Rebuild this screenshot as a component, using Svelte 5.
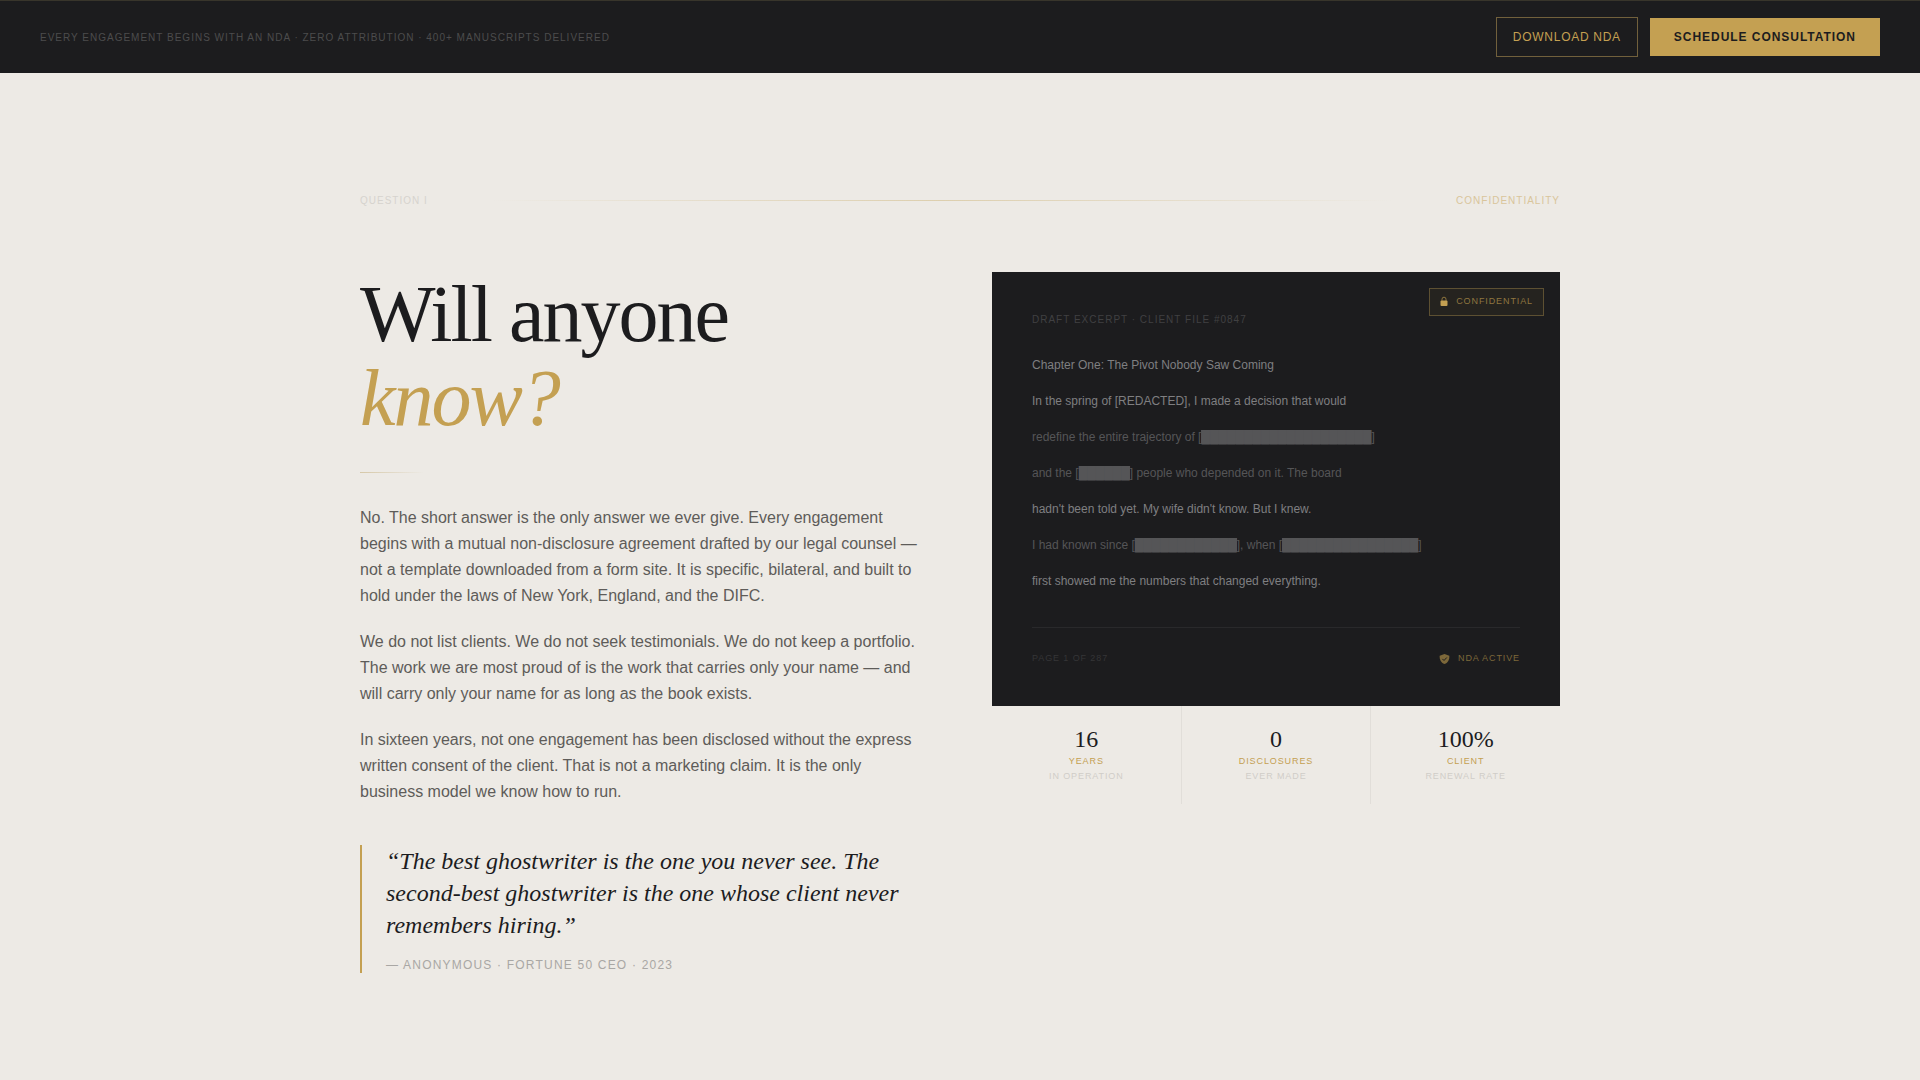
<script lang="ts">
  type Line = { text: string; bright: boolean };

  const block = (n: number) => '█'.repeat(n);

  const excerpt: Line[] = [
    { text: 'Chapter One: The Pivot Nobody Saw Coming', bright: true },
    { text: 'In the spring of [REDACTED], I made a decision that would', bright: true },
    { text: `redefine the entire trajectory of [${block(20)}]`, bright: false },
    { text: `and the [${block(6)}] people who depended on it. The board`, bright: false },
    { text: "hadn't been told yet. My wife didn't know. But I knew.", bright: true },
    { text: `I had known since [${block(12)}], when [${block(16)}]`, bright: false },
    { text: 'first showed me the numbers that changed everything.', bright: true }
  ];

  const parts = (text: string) => text.split(/(█+)/).filter(Boolean);

  const stats = [
    { value: '16', label: 'Years', note: 'In operation' },
    { value: '0', label: 'Disclosures', note: 'Ever made' },
    { value: '100%', label: 'Client', note: 'Renewal rate' }
  ];
</script>

<header class="bar">
  <p class="bar-note">Every engagement begins with an NDA · Zero attribution · 400+ manuscripts delivered</p>
  <div class="bar-actions">
    <button class="btn btn-outline" type="button">Download NDA</button>
    <button class="btn btn-solid" type="button">Schedule Consultation</button>
  </div>
</header>

<main class="section">
  <div class="section-head">
    <span class="head-label">Question I</span>
    <span class="head-rule"></span>
    <span class="head-label head-topic">Confidentiality</span>
  </div>

  <div class="columns">
    <section>
      <h1>Will anyone<br /><em>know?</em></h1>
      <div class="title-rule"></div>

      <div class="copy">
        <p>
          No. The short answer is the only answer we ever give. Every engagement begins with a mutual
          non-disclosure agreement drafted by our legal counsel — not a template downloaded from a
          form site. It is specific, bilateral, and built to hold under the laws of New York,
          England, and the DIFC.
        </p>
        <p>
          We do not list clients. We do not seek testimonials. We do not keep a portfolio. The work
          we are most proud of is the work that carries only your name — and will carry only your
          name for as long as the book exists.
        </p>
        <p>
          In sixteen years, not one engagement has been disclosed without the express written
          consent of the client. That is not a marketing claim. It is the only business model we
          know how to run.
        </p>
      </div>

      <figure class="quote">
        <blockquote>
          “The best ghostwriter is the one you never see. The second-best ghostwriter is the one
          whose client never remembers hiring.”
        </blockquote>
        <figcaption>— Anonymous · Fortune 50 CEO · 2023</figcaption>
      </figure>
    </section>

    <aside>
      <article class="draft">
        <div class="stamp">
          <svg width="8" height="10" viewBox="0 0 8 10" aria-hidden="true">
            <path d="M2 4.8V3.2a2 2 0 0 1 4 0v1.6" fill="none" stroke="#8f763f" />
            <rect x="0.5" y="4.5" width="7" height="5.5" rx="1" fill="currentColor" />
          </svg>
          <span>Confidential</span>
        </div>

        <p class="draft-label">Draft excerpt · Client file #0847</p>

        <div class="excerpt">
          {#each excerpt as line}
            <p class:bright={line.bright}>
              {#each parts(line.text) as part}<span class:redacted={part.startsWith('█')}>{part}</span>{/each}
            </p>
          {/each}
        </div>

        <footer class="draft-foot">
          <span>Page 1 of 287</span>
          <span class="nda">
            <svg width="11" height="10" viewBox="0 0 11 10" aria-hidden="true">
              <path
                d="M5.5 0 10.3 1.7C10.6 5.4 9.2 8.5 5.5 10 1.8 8.5 .4 5.4 .7 1.7Z"
                fill="currentColor"
              />
              <path d="m3.4 4.9 1.6 1.6 2.8-3" fill="none" stroke="#1c1c1e" />
            </svg>
            NDA active
          </span>
        </footer>
      </article>

      <dl class="stats">
        {#each stats as stat}
          <div class="stat">
            <dd class="value">{stat.value}</dd>
            <dt>{stat.label}</dt>
            <dd class="note">{stat.note}</dd>
          </div>
        {/each}
      </dl>
    </aside>
  </div>
</main>

<style>
  :global(body) {
    background: #edeae5;
    color: #1c1c1e;
    font-family: 'Liberation Sans', Arial, sans-serif;
  }

  h1,
  p,
  dl,
  dd,
  figure,
  blockquote {
    margin: 0;
  }

  .bar {
    display: flex;
    align-items: center;
    justify-content: space-between;
    padding: 16px 40px;
    border-top: 1px solid #38352b;
    background: #1c1c1e;
  }

  .bar-note {
    color: #4c4c4d;
    font-size: 10px;
    line-height: 15px;
    letter-spacing: 1px;
    text-transform: uppercase;
  }

  .bar-actions {
    display: flex;
    align-items: center;
    gap: 12px;
  }

  .btn {
    border: 0;
    border-radius: 0;
    font-family: inherit;
    font-size: 12px;
    line-height: 18px;
    text-transform: uppercase;
    cursor: pointer;
  }

  .btn-outline {
    padding: 10px 16px;
    border: 1px solid #71603c;
    background: transparent;
    color: #c4a052;
    letter-spacing: 0.06em;
  }

  .btn-solid {
    padding: 10px 24px;
    background: #c4a052;
    color: #1c1c1e;
    font-weight: 700;
    letter-spacing: 0.08em;
  }

  .section {
    max-width: 1200px;
    margin: 0 auto;
    padding: 120px 24px 96px;
  }

  .section-head {
    display: flex;
    align-items: center;
    justify-content: space-between;
    margin-bottom: 64px;
  }

  .head-label {
    color: #d6d3ce;
    font-size: 10px;
    line-height: 15px;
    letter-spacing: 1px;
    text-transform: uppercase;
  }

  .head-topic {
    color: #d9c59b;
  }

  .head-rule {
    flex: 1;
    height: 1px;
    margin: 0 64px;
    background: linear-gradient(to right, transparent, #ddcfae, transparent);
  }

  .columns {
    display: grid;
    grid-template-columns: 1fr 1fr;
    align-items: start;
    gap: 64px;
  }

  h1 {
    font-family: 'Liberation Serif', 'Times New Roman', serif;
    font-size: 80px;
    font-weight: 400;
    line-height: 84px;
    letter-spacing: -2px;
  }

  h1 em {
    color: #c4a052;
  }

  .title-rule {
    width: 64px;
    height: 1px;
    margin: 32px 0;
    background: linear-gradient(to right, #d6c8a8, transparent);
  }

  .copy {
    display: grid;
    gap: 20px;
    color: #5e5c59;
    font-size: 16px;
    line-height: 26px;
  }

  .quote {
    margin-top: 40px;
    padding-left: 24px;
    border-left: 2px solid #c4a052;
  }

  blockquote {
    font-family: 'Liberation Serif', 'Times New Roman', serif;
    font-size: 24px;
    font-style: italic;
    line-height: 32px;
  }

  figcaption {
    margin-top: 16px;
    color: #a9a7a4;
    font-size: 12px;
    line-height: 16px;
    letter-spacing: 0.1em;
    text-transform: uppercase;
  }

  .draft {
    position: relative;
    padding: 40px;
    background: #1c1c1e;
  }

  .stamp {
    position: absolute;
    top: 16px;
    right: 16px;
    display: flex;
    align-items: center;
    gap: 8px;
    padding: 5px 10px 7px;
    border: 1px solid #5d5032;
    background: #25231f;
    color: #8f763f;
    font-size: 9px;
    line-height: 14px;
    letter-spacing: 0.1em;
    text-transform: uppercase;
  }

  .stamp svg {
    color: #c4a052;
  }

  .draft-label {
    margin-bottom: 24px;
    color: #404042;
    font-size: 10px;
    line-height: 16px;
    letter-spacing: 1px;
    text-transform: uppercase;
  }

  .excerpt {
    display: grid;
    gap: 10px;
    color: #555557;
    font-size: 12px;
    line-height: 26px;
  }

  .excerpt .bright {
    color: #7f7f81;
  }

  .redacted {
    background: #525254;
  }

  .draft-foot {
    display: flex;
    align-items: center;
    justify-content: space-between;
    margin-top: 33px;
    padding-top: 23px;
    border-top: 1px solid #29292b;
    color: #353537;
    font-size: 9px;
    line-height: 15px;
    letter-spacing: 0.1em;
    text-transform: uppercase;
  }

  .nda {
    display: flex;
    align-items: center;
    gap: 8px;
    color: #7d683a;
  }

  .stats {
    display: grid;
    grid-template-columns: repeat(3, 1fr);
    gap: 1px;
    background: #e1ded9;
  }

  .stat {
    display: flex;
    flex-direction: column;
    padding: 18px 16px 20px;
    background: #edeae5;
    text-align: center;
    text-transform: uppercase;
    font-size: 9px;
    line-height: 15px;
    letter-spacing: 0.1em;
  }

  .value {
    font-family: 'Liberation Serif', 'Times New Roman', serif;
    font-size: 24px;
    line-height: 30px;
    letter-spacing: 0;
  }

  dt {
    color: #c4a052;
  }

  .note {
    color: #d0cdc8;
  }
</style>
